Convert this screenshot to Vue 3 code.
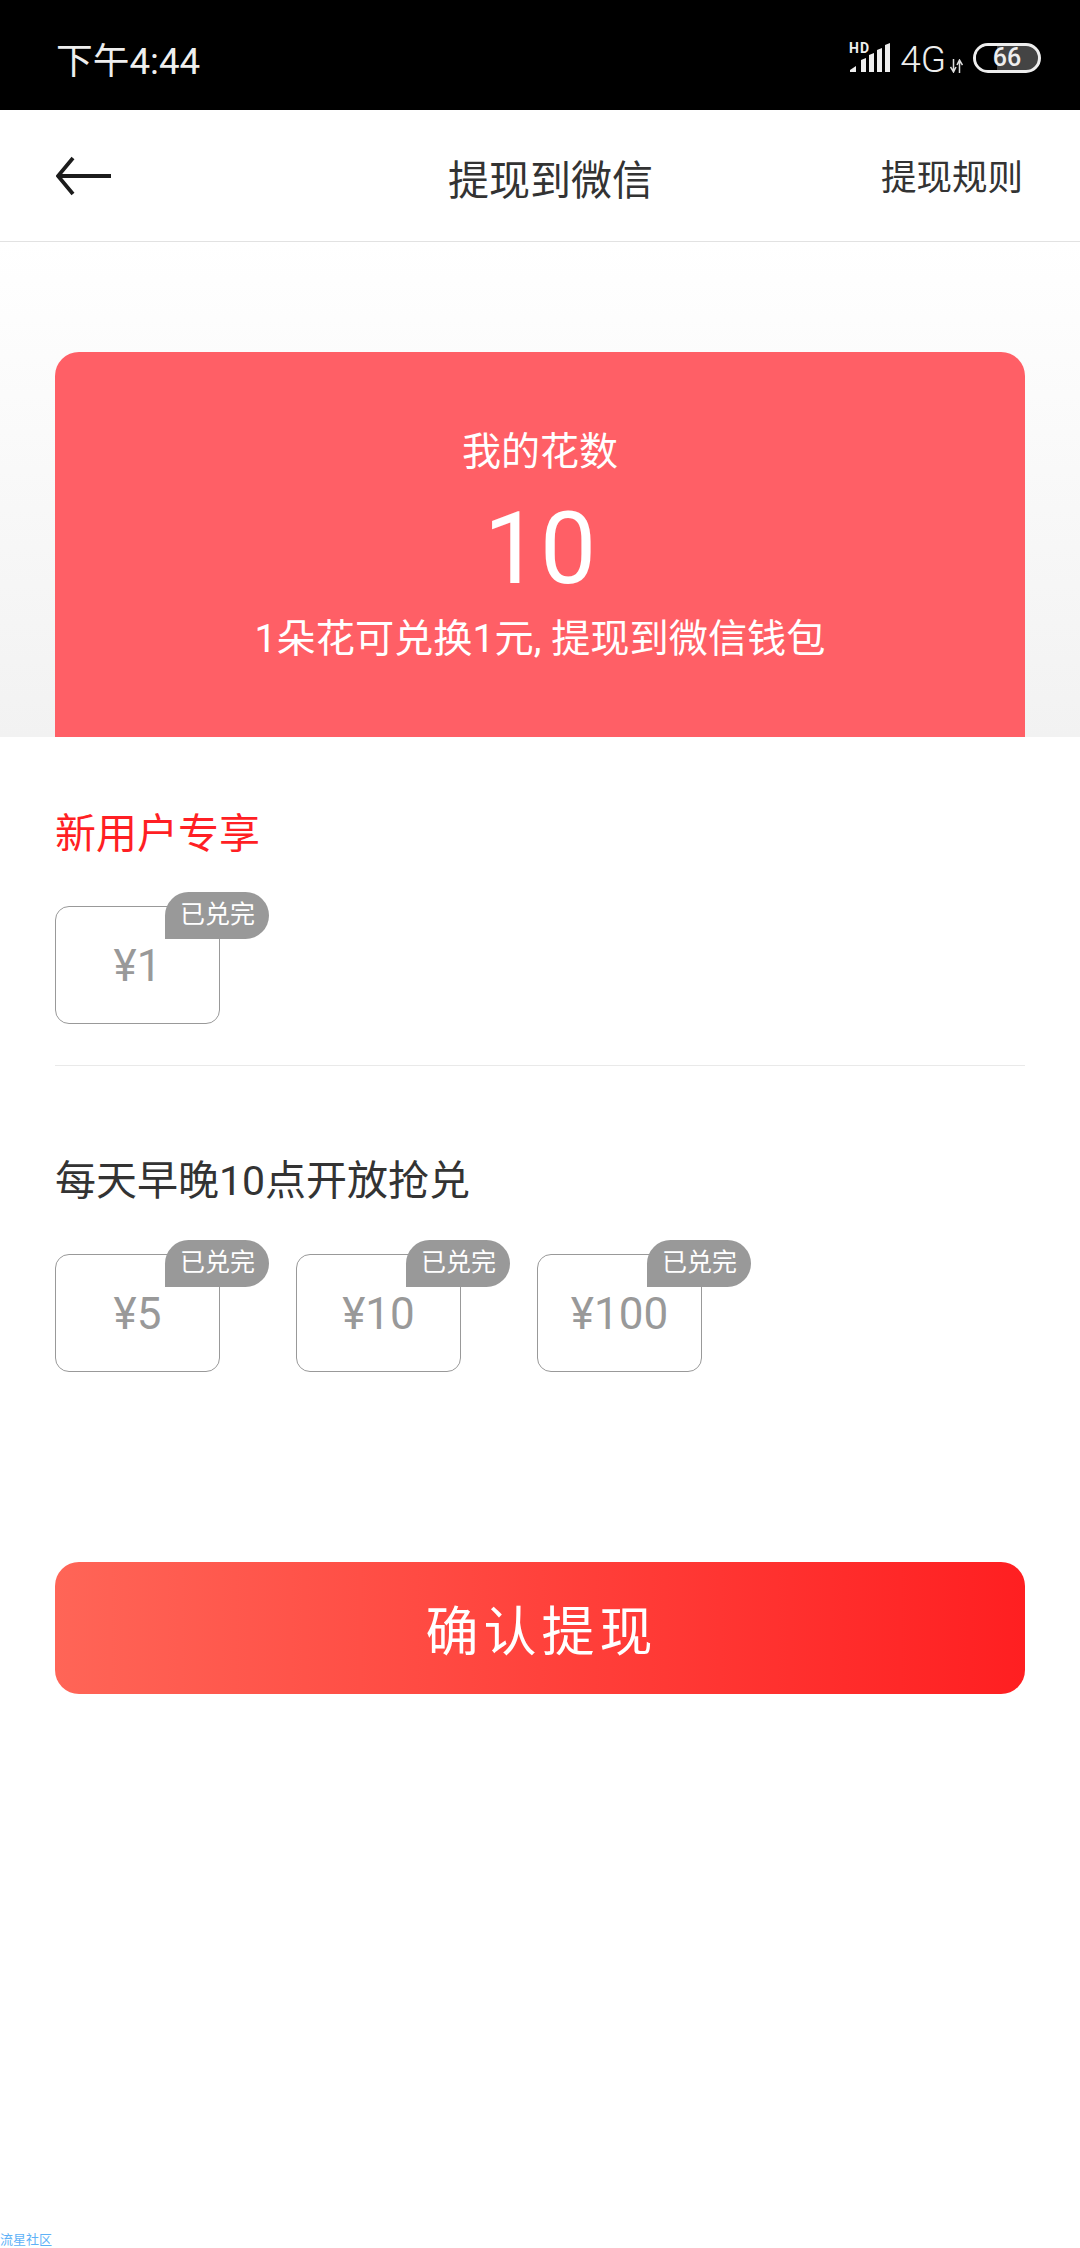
<template>
  <div class="page">
    <div class="status-bar">
      <span class="status-time">下午4:44</span>
      <div class="status-right">
        <svg class="signal" width="42" height="36" viewBox="0 0 42 36">
          <text x="0" y="16" class="hd">HD</text>
          <path d="M1 35 V33 L7 29 V35 Z M12 35 V23 L17 21 V35 Z M20 35 V18 L25 16 V35 Z M28 35 V13 L33 11 V35 Z M36 35 V8 L41 6 V35 Z" fill="#eee" />
        </svg>
        <span class="net">4G</span>
        <svg class="arrows" width="13" height="14" viewBox="0 0 13 14">
          <path d="M3.5 0 V12 M0.5 8 L3.5 13 L6 8 M9.5 14 V2 M7 6 L9.5 1 L12.5 6" stroke="#ddd" stroke-width="1.5" fill="none" />
        </svg>
        <div class="battery">
          <div class="battery-fill"></div>
          <span class="battery-num">66</span>
        </div>
      </div>
    </div>

    <div class="nav">
      <svg class="back" width="56" height="40" viewBox="0 0 56 40">
        <path d="M55 20 H3 M17 2 L2 20 L17 38" stroke="#1c1c1c" stroke-width="3.8" fill="none" />
      </svg>
      <span class="nav-title">提现到微信</span>
      <span class="nav-link">提现规则</span>
    </div>

    <div class="hero">
      <div class="card">
        <div class="card-label">我的花数</div>
        <div class="card-num">10</div>
        <div class="card-tip">1朵花可兑换1元, 提现到微信钱包</div>
      </div>
    </div>

    <div class="section first">
      <div class="sec-title red">新用户专享</div>
      <div class="coupons">
        <div v-for="c in newUser" :key="c" class="coupon">
          <span class="amount">{{ c }}</span>
          <span class="badge">已兑完</span>
        </div>
      </div>
    </div>

    <div class="section second">
      <div class="sec-title">每天早晚10点开放抢兑</div>
      <div class="coupons">
        <div v-for="c in daily" :key="c" class="coupon">
          <span class="amount">{{ c }}</span>
          <span class="badge">已兑完</span>
        </div>
      </div>
    </div>

    <div class="btn">确认提现</div>

    <div class="watermark">流星社区</div>
  </div>
</template>

<script setup>
const newUser = ['¥1']
const daily = ['¥5', '¥10', '¥100']
</script>

<style>
html, body { margin: 0; background: #fff; }
</style>

<style scoped>
.page {
  position: relative;
  width: 1080px;
  height: 2248px;
  overflow: hidden;
  background: #fff;
  font-family: Roboto, "Noto Sans CJK SC", sans-serif;
  color: #333;
}
.status-bar {
  height: 110px;
  box-sizing: border-box;
  padding: 0 39px 0 56px;
  background: #000;
  display: flex;
  align-items: center;
  justify-content: space-between;
  color: #eee;
}
.status-time { font-size: 36.7px; margin-top: 6px; }
.status-right { display: flex; align-items: center; height: 36px; }
.hd { font: 700 14px Roboto, sans-serif; letter-spacing: 1px; fill: #eee; }
.net { font-size: 37px; font-weight: 300; line-height: 36px; margin: 9px 0 0 9px; }
.arrows { margin: 22px 0 0 4px; }
.battery {
  position: relative;
  width: 68px;
  height: 30px;
  box-sizing: border-box;
  margin: 6px 0 0 10px;
  border: 3px solid #eee;
  border-radius: 15px;
  overflow: hidden;
  background: #444;
  display: flex;
  align-items: center;
  justify-content: center;
}
.battery-fill {
  position: absolute;
  left: 0;
  top: 0;
  bottom: 0;
  width: 34%;
  background: #000;
}
.battery-num {
  position: relative;
  font-size: 25px;
  font-weight: 500;
  line-height: 24px;
  color: #eee;
}
.nav {
  height: 132px;
  box-sizing: border-box;
  border-bottom: 1px solid #e2e2e2;
  padding: 0 57px 0 56px;
  display: flex;
  align-items: center;
  justify-content: space-between;
}
.nav-title { font-size: 41px; margin-left: 108px; margin-top: 2px; color: #333; }
.nav-link { font-size: 35.5px; margin-top: -2px; color: #333; }
.hero {
  height: 495px;
  box-sizing: border-box;
  padding: 110px 55px 0;
  background: linear-gradient(#fff, #f2f2f2);
}
.card {
  height: 385px;
  box-sizing: border-box;
  padding-top: 75px;
  background: #ff5f66;
  border-radius: 24px 24px 0 0;
  color: #fff;
  text-align: center;
}
.card-label { font-size: 39px; line-height: 50px; }
.card-num { font-size: 100px; font-weight: 400; line-height: 110px; margin-top: 17px; }
.card-tip { font-size: 39.2px; line-height: 50px; margin-top: 10px; }
.section { margin: 0 55px; }
.first {
  height: 329px;
  box-sizing: border-box;
  padding-top: 67px;
  border-bottom: 1px solid #e9e9e9;
}
.second { padding-top: 85px; }
.sec-title { font-size: 41px; line-height: 60px; color: #333; }
.red { color: #ff1f24; }
.coupons {
  display: flex;
  gap: 76px;
  margin-top: 42px;
}
.second .coupons { margin-top: 43px; }
.coupon {
  position: relative;
  width: 165px;
  height: 118px;
  box-sizing: border-box;
  border: 1px solid #999;
  border-radius: 14px;
  display: flex;
  align-items: center;
  justify-content: center;
  font-size: 44px;
  color: #999;
}
.amount { margin-top: 2px; }
.badge {
  position: absolute;
  left: 109px;
  top: -15px;
  width: 104px;
  height: 47px;
  box-sizing: border-box;
  padding-left: 15px;
  background: #999;
  border-radius: 24px 24px 24px 0;
  color: #fff;
  font-size: 25px;
  line-height: 46px;
  white-space: nowrap;
}
.btn {
  height: 132px;
  margin: 190px 55px 0;
  padding-left: 3px;
  border-radius: 24px;
  background: linear-gradient(90deg, #ff6557, #ff1f21);
  color: #fff;
  font-size: 53px;
  letter-spacing: 5px;
  display: flex;
  align-items: center;
  justify-content: center;
}
.watermark {
  position: absolute;
  left: 0;
  bottom: 0;
  font-size: 13px;
  line-height: 16px;
  color: #5fb2f7;
}
</style>
